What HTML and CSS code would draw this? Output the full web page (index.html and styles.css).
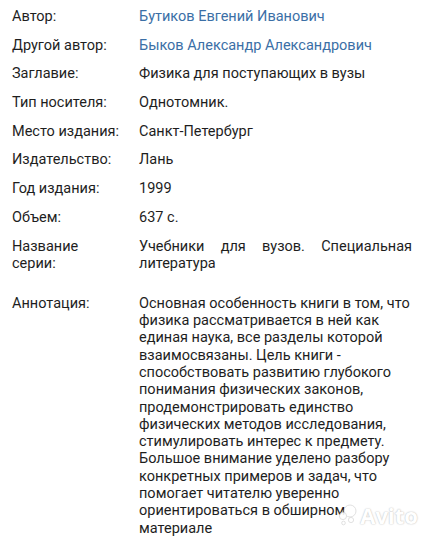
FILE: index.html
```html
<!DOCTYPE html>
<html lang="ru">
<head>
<meta charset="utf-8">
<link rel="stylesheet" href="styles.css">
</head>
<body>
<div class="card">
  <dl class="props">
    <dt>Автор:</dt><dd class="link">Бутиков Евгений Иванович</dd>
    <dt>Другой автор:</dt><dd class="link">Быков Александр Александрович</dd>
    <dt>Заглавие:</dt><dd>Физика для поступающих в вузы</dd>
    <dt>Тип носителя:</dt><dd>Однотомник.</dd>
    <dt>Место издания:</dt><dd>Санкт-Петербург</dd>
    <dt>Издательство:</dt><dd>Лань</dd>
    <dt>Год издания:</dt><dd>1999</dd>
    <dt>Объем:</dt><dd>637 с.</dd>
    <dt>Название серии:</dt><dd class="justify">Учебники для вузов. Специальная литература</dd>
    <dt class="ann">Аннотация:</dt><dd class="ann">Основная особенность книги в том, что физика рассматривается в ней как единая наука, все разделы которой взаимосвязаны. Цель книги - способствовать развитию глубокого понимания физических законов, продемонстрировать единство физических методов исследования, стимулировать интерес к предмету. Большое внимание уделено разбору конкретных примеров и задач, что помогает читателю уверенно ориентироваться в обширном материале</dd>
  </dl>
  <div class="watermark">
    <svg width="20" height="22" viewBox="0 0 20 22" aria-hidden="true">
      <circle cx="12" cy="7" r="6" />
      <circle cx="5" cy="12" r="3.6" />
      <circle cx="13" cy="16" r="2.6" />
      <circle cx="5.5" cy="19" r="1.8" />
    </svg>
    <span>Avito</span>
  </div>
</div>
</body>
</html>
```

FILE: styles.css
```css
html, body {
  margin: 0;
  padding: 0;
  background: #ffffff;
}
body {
  font-family: Roboto, "Noto Sans", "Liberation Sans", sans-serif;
  font-size: 14.5px;
  line-height: 17.3px;
  color: #1e1e1e;
  width: 432px;
  height: 540px;
  overflow: hidden;
}
.card {
  position: relative;
  height: 540px;
  padding: 8px 20px 0 12px;
  box-sizing: border-box;
}
.props {
  margin: 0;
  display: grid;
  grid-template-columns: 127px 1fr;
  row-gap: 11.4px;
}
.props dt {
  margin: 0;
  padding-right: 14px;
}
.props dd {
  margin: 0;
}
.props .link {
  color: #3b6fa6;
}
.props .justify {
  text-align: justify;
  text-align-last: left;
}
.props .ann {
  margin-top: 11.3px;
}
.watermark {
  position: absolute;
  right: 14px;
  bottom: 14px;
  display: flex;
  align-items: center;
  gap: 2px;
  opacity: 0.9;
}
.watermark svg circle {
  fill: #ffffff;
  stroke: #d6d6d6;
  stroke-width: 0.8;
}
.watermark span {
  font-family: "Noto Sans", Roboto, sans-serif;
  font-weight: 700;
  font-size: 22px;
  line-height: 22px;
  color: #ffffff;
  text-shadow: 0 0 1px #bdbdbd, 0 0 2px #cfcfcf;
}
```
